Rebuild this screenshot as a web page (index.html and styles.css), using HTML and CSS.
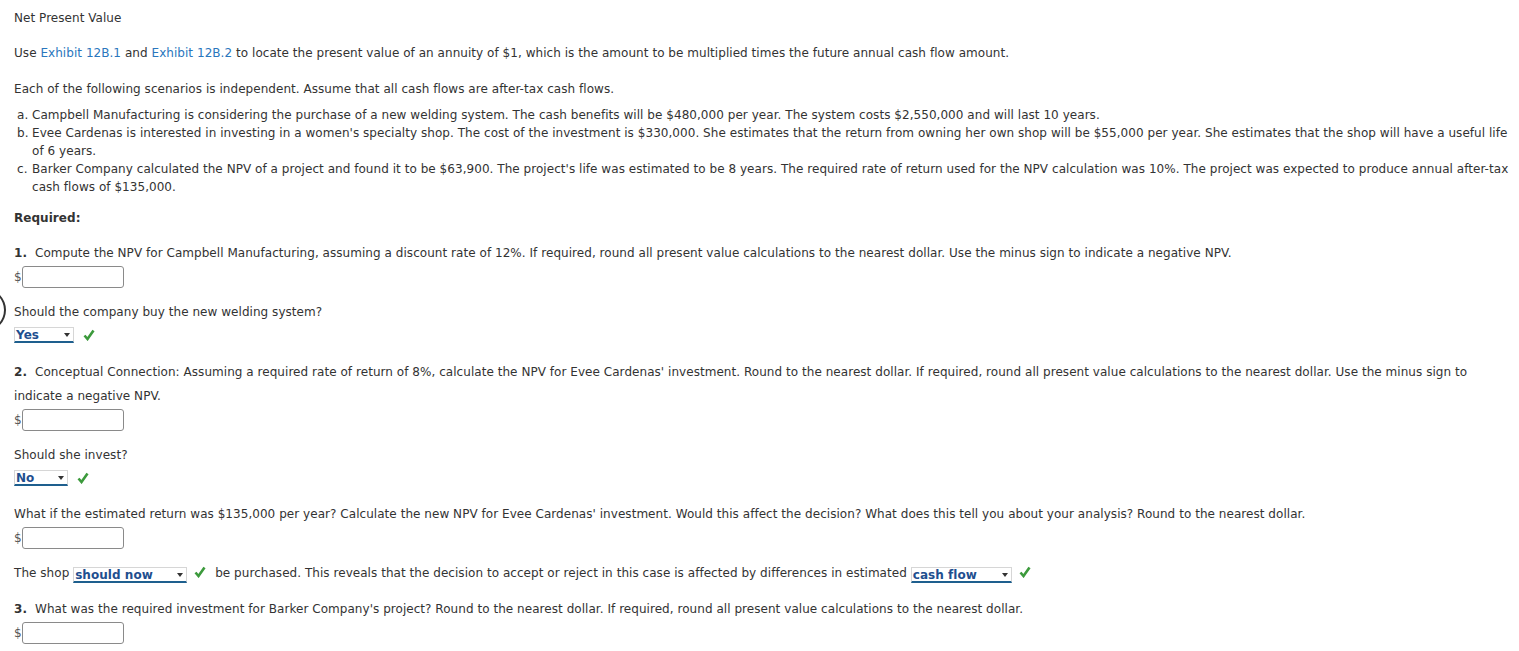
FILE: index.html
```html
<!DOCTYPE html>
<html>
<head>
<meta charset="utf-8">
<title>Net Present Value</title>
<link rel="stylesheet" href="styles.css">
</head>
<body>
<div class="page">
  <p class="title">Net Present Value</p>
  <p class="intro">Use <a class="link" href="#">Exhibit 12B.1</a> and <a class="link" href="#">Exhibit 12B.2</a> to locate the present value of an annuity of $1, which is the amount to be multiplied times the future annual cash flow amount.</p>
  <p class="intro2">Each of the following scenarios is independent. Assume that all cash flows are after-tax cash flows.</p>
  <ol class="scen">
    <li><span class="lbl">a.</span><span>Campbell Manufacturing is considering the purchase of a new welding system. The cash benefits will be $480,000 per year. The system costs $2,550,000 and will last 10 years.</span></li>
    <li><span class="lbl">b.</span><span>Evee Cardenas is interested in investing in a women's specialty shop. The cost of the investment is $330,000. She estimates that the return from owning her own shop will be $55,000 per year. She estimates that the shop will have a useful life of 6 years.</span></li>
    <li><span class="lbl">c.</span><span>Barker Company calculated the NPV of a project and found it to be $63,900. The project's life was estimated to be 8 years. The required rate of return used for the NPV calculation was 10%. The project was expected to produce annual after-tax cash flows of $135,000.</span></li>
  </ol>
  <p class="req">Required:</p>

  <p class="q"><b class="num">1.</b>Compute the NPV for Campbell Manufacturing, assuming a discount rate of 12%. If required, round all present value calculations to the nearest dollar. Use the minus sign to indicate a negative NPV.</p>
  <div class="ans"><span class="dollar">$</span><span class="box"></span></div>
  <p class="sub">Should the company buy the new welding system?</p>
  <div class="choice"><span class="sel w-yes">Yes<i class="arr"></i></span><svg class="chk" viewBox="0 0 12 12"><polyline points="1.5,6.5 4.5,10 10.5,1.5"/></svg></div>

  <p class="q q2"><b class="num">2.</b>Conceptual Connection: Assuming a required rate of return of 8%, calculate the NPV for Evee Cardenas' investment. Round to the nearest dollar. If required, round all present value calculations to the nearest dollar. Use the minus sign to indicate a negative NPV.</p>
  <div class="ans"><span class="dollar">$</span><span class="box"></span></div>
  <p class="sub">Should she invest?</p>
  <div class="choice"><span class="sel w-no">No<i class="arr"></i></span><svg class="chk" viewBox="0 0 12 12"><polyline points="1.5,6.5 4.5,10 10.5,1.5"/></svg></div>

  <p class="q q3">What if the estimated return was $135,000 per year? Calculate the new NPV for Evee Cardenas' investment. Would this affect the decision? What does this tell you about your analysis? Round to the nearest dollar.</p>
  <div class="ans"><span class="dollar">$</span><span class="box"></span></div>
  <p class="inline">The shop <span class="sel w-should">should now<i class="arr"></i></span><svg class="chk" viewBox="0 0 12 12"><polyline points="1.5,6.5 4.5,10 10.5,1.5"/></svg>be purchased. This reveals that the decision to accept or reject in this case is affected by differences in estimated <span class="sel w-cash">cash flow<i class="arr"></i></span><svg class="chk" viewBox="0 0 12 12"><polyline points="1.5,6.5 4.5,10 10.5,1.5"/></svg></p>

  <p class="q q4"><b class="num">3.</b>What was the required investment for Barker Company's project? Round to the nearest dollar. If required, round all present value calculations to the nearest dollar.</p>
  <div class="ans"><span class="dollar">$</span><span class="box"></span></div>

  <div class="ring"></div>
</div>
</body>
</html>
```

FILE: styles.css
```css
html, body {
  margin: 0;
  padding: 0;
  background: #ffffff;
}
.page {
  position: relative;
  padding: 9px 5px 0 14px;
  font-family: "DejaVu Sans", Verdana, sans-serif;
  font-size: 12px;
  line-height: 18px;
  color: #333333;
  letter-spacing: 0.045px;
}
p { margin: 0; }
.link {
  color: #2a76bd;
  text-decoration: none;
}
.intro { margin-top: 17px; }
.intro2 { margin-top: 18px; }
.scen {
  list-style: none;
  margin: 8px 0 0 3px;
  padding: 0;
}
.scen li {
  display: flex;
}
.scen .lbl {
  flex: 0 0 auto;
  width: 15px;
}
.req {
  margin-top: 13px;
  font-weight: bold;
}
.q {
  margin-top: 14px;
  line-height: 24px;
}
.num {
  display: inline-block;
  font-weight: bold;
  margin-right: 8px;
}
.q2 { margin-top: 16px; }
.q3 { margin-top: 15px; }
.q4 { margin-top: 14px; }
.ans {
  display: flex;
  align-items: center;
  margin-top: 1px;
  height: 22px;
}
.dollar {
  color: #555;
  width: 8px;
}
.box {
  display: block;
  width: 100px;
  height: 20px;
  border: 1px solid #8a8a8a;
  border-radius: 3px;
  background: #fff;
}
.sub { margin-top: 15px; }
.choice {
  display: flex;
  align-items: center;
  margin-top: 5px;
  height: 18px;
}
.sel {
  position: relative;
  display: inline-block;
  box-sizing: border-box;
  height: 16px;
  line-height: 14px;
  padding-left: 1px;
  border: 1px solid #d6d6d6;
  border-bottom: 2px solid #1e5f8e;
  font-weight: bold;
  color: #1f4f8f;
  vertical-align: -2px;
}
.arr {
  position: absolute;
  right: 3px;
  top: 5px;
  width: 0;
  height: 0;
  border-left: 3.5px solid transparent;
  border-right: 3.5px solid transparent;
  border-top: 4px solid #333;
}
.w-yes { width: 60px; }
.w-no { width: 54px; }
.w-should { width: 114px; }
.w-cash { width: 101px; }
.chk {
  width: 12px;
  height: 12px;
  margin-left: 9px;
  fill: none;
  stroke: #3c9a3c;
  stroke-width: 2.6;
}
.inline {
  margin-top: 15px;
}
.inline .chk {
  vertical-align: -1px;
  margin-left: 7px;
  margin-right: 9px;
}
.ring {
  position: absolute;
  left: -34px;
  top: 289px;
  width: 36px;
  height: 38px;
  border: 2.5px solid #333;
  border-radius: 50%;
}
```
